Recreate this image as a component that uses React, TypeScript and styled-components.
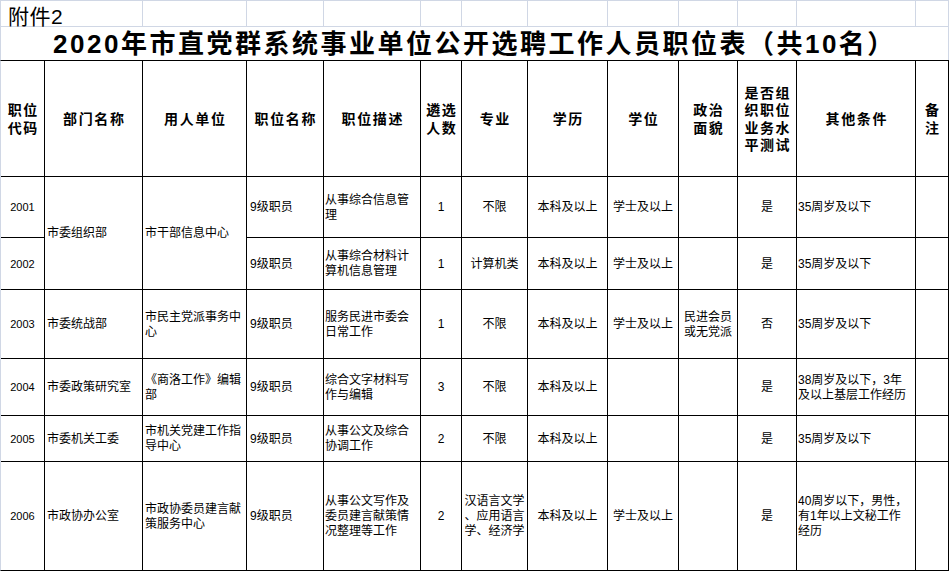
import React from 'react';
import styled, { createGlobalStyle } from 'styled-components';

const GRID = '#d0d7e5';
const COLS = '43px 97px 103px 76px 96px 40px 65px 79px 70px 58px 58px 118px 32px';
const ROWS = '115px 60px 51px 68px 56px 45px 108px';

const Global = createGlobalStyle`
  html, body { margin: 0; padding: 0; background: #fff; }
  body { width: 949px; height: 571px; overflow: hidden; }
  * { box-sizing: content-box; }
`;

const Sheet = styled.div`
  width: 949px;
  color: #000;
  font-family: "Liberation Sans", "Noto Sans CJK SC", sans-serif;
`;

const TopRow = styled.div`
  display: grid;
  grid-template-columns: ${COLS};
  grid-template-rows: 25px;
  column-gap: 1px;
  background: ${GRID};
  border: 1px solid ${GRID};
`;

const SheetCell = styled.div<{ $span?: number }>`
  background: #fff;
  grid-column: span ${(p) => p.$span || 1};
  position: relative;
`;

const Caption = styled.div`
  display: flex;
  align-items: flex-end;
  height: 25px;
  padding-left: 7px;
  font-family: "Liberation Sans", "Noto Sans CJK SC", sans-serif;
  font-size: 21px;
  line-height: 21px;
  letter-spacing: 0.5px;
  white-space: nowrap;
  transform: translateY(1px);
`;

const TitleRow = styled.div`
  height: 33px;
  border-left: 1px solid ${GRID};
  border-right: 1px solid ${GRID};
  display: flex;
  align-items: center;
  justify-content: center;
`;

const Title = styled.h1`
  margin: 0;
  padding: 2px 0 0 0;
  font-family: "Liberation Sans", "Noto Sans CJK SC", sans-serif;
  font-size: 26px;
  font-weight: 700;
  letter-spacing: 2.5px;
  line-height: 31px;
  white-space: nowrap;
`;

const Table = styled.div`
  display: grid;
  grid-template-columns: ${COLS};
  grid-template-rows: ${ROWS};
  gap: 1px;
  background: #000;
  border: 1px solid #000;
  border-left-color: ${GRID};
`;

const HeadCell = styled.div`
  background: #fff;
  display: flex;
  align-items: center;
  justify-content: center;
  text-align: center;
  font-family: "Liberation Sans", "Noto Sans CJK SC", sans-serif;
  font-size: 14px;
  font-weight: 700;
  line-height: 17.5px;
  letter-spacing: 1.6px;
  padding: 2px 0 0 1.6px;
  white-space: nowrap;
`;

const Cell = styled.div<{ $align?: 'left' | 'center'; $span?: number; $pad?: number; $size?: number }>`
  background: #fff;
  grid-row: span ${(p) => p.$span || 1};
  display: flex;
  align-items: center;
  justify-content: ${(p) => (p.$align === 'left' ? 'flex-start' : 'center')};
  text-align: ${(p) => (p.$align === 'left' ? 'left' : 'center')};
  padding-top: 1px;
  padding-left: ${(p) => (p.$align === 'left' ? p.$pad ?? 2 : 0)}px;
  font-size: ${(p) => p.$size || 12}px;
  line-height: 15px;
  white-space: nowrap;
  overflow: hidden;
`;

const Lines: React.FC<{ lines: string[] }> = ({ lines }) => (
  <span>
    {lines.map((l, i) => (
      <React.Fragment key={i}>
        {i > 0 && <br />}
        {l}
      </React.Fragment>
    ))}
  </span>
);

const headers: string[][] = [
  ['职位', '代码'],
  ['部门名称'],
  ['用人单位'],
  ['职位名称'],
  ['职位描述'],
  ['遴选', '人数'],
  ['专业'],
  ['学历'],
  ['学位'],
  ['政治', '面貌'],
  ['是否组', '织职位', '业务水', '平测试'],
  ['其他条件'],
  ['备', '注'],
];

type Row = {
  code: string;
  dept?: string[];
  unit?: string[];
  span?: number;
  desc: string[];
  n: string;
  major: string[];
  degree: string;
  pol: string[];
  test: string;
  other: string[];
};

const rows: Row[] = [
  {
    code: '2001',
    dept: ['市委组织部'],
    unit: ['市干部信息中心'],
    span: 2,
    desc: ['从事综合信息管', '理'],
    n: '1',
    major: ['不限'],
    degree: '学士及以上',
    pol: [],
    test: '是',
    other: ['35周岁及以下'],
  },
  {
    code: '2002',
    desc: ['从事综合材料计', '算机信息管理'],
    n: '1',
    major: ['计算机类'],
    degree: '学士及以上',
    pol: [],
    test: '是',
    other: ['35周岁及以下'],
  },
  {
    code: '2003',
    dept: ['市委统战部'],
    unit: ['市民主党派事务中', '心'],
    desc: ['服务民进市委会', '日常工作'],
    n: '1',
    major: ['不限'],
    degree: '学士及以上',
    pol: ['民进会员', '或无党派'],
    test: '否',
    other: ['35周岁及以下'],
  },
  {
    code: '2004',
    dept: ['市委政策研究室'],
    unit: ['《商洛工作》编辑', '部'],
    desc: ['综合文字材料写', '作与编辑'],
    n: '3',
    major: ['不限'],
    degree: '',
    pol: [],
    test: '是',
    other: ['38周岁及以下，3年', '及以上基层工作经历'],
  },
  {
    code: '2005',
    dept: ['市委机关工委'],
    unit: ['市机关党建工作指', '导中心'],
    desc: ['从事公文及综合', '协调工作'],
    n: '2',
    major: ['不限'],
    degree: '',
    pol: [],
    test: '是',
    other: ['35周岁及以下'],
  },
  {
    code: '2006',
    dept: ['市政协办公室'],
    unit: ['市政协委员建言献', '策服务中心'],
    desc: ['从事公文写作及', '委员建言献策情', '况整理等工作'],
    n: '2',
    major: ['汉语言文学', '、应用语言', '学、经济学'],
    degree: '学士及以上',
    pol: [],
    test: '是',
    other: ['40周岁以下，男性，', '有1年以上文秘工作', '经历'],
  },
];

export default function App() {
  return (
    <>
      <Global />
      <Sheet>
        <TopRow>
          <SheetCell $span={2}>
            <Caption>附件2</Caption>
          </SheetCell>
          {Array.from({ length: 11 }).map((_, i) => (
            <SheetCell key={i} />
          ))}
        </TopRow>
        <TitleRow>
          <Title>2020年市直党群系统事业单位公开选聘工作人员职位表（共10名）</Title>
        </TitleRow>
        <Table>
          {headers.map((h, i) => (
            <HeadCell key={i}>
              <Lines lines={h} />
            </HeadCell>
          ))}
          {rows.map((r) => (
            <React.Fragment key={r.code}>
              <Cell $size={11}>{r.code}</Cell>
              {r.dept && (
                <Cell $align="left" $span={r.span}>
                  <Lines lines={r.dept} />
                </Cell>
              )}
              {r.unit && (
                <Cell $align="left" $span={r.span}>
                  <Lines lines={r.unit} />
                </Cell>
              )}
              <Cell $align="left" $pad={3}>9级职员</Cell>
              <Cell $align="left" $pad={1}>
                <Lines lines={r.desc} />
              </Cell>
              <Cell>{r.n}</Cell>
              <Cell>
                <Lines lines={r.major} />
              </Cell>
              <Cell>本科及以上</Cell>
              <Cell>{r.degree}</Cell>
              <Cell>
                <Lines lines={r.pol} />
              </Cell>
              <Cell>{r.test}</Cell>
              <Cell $align="left" $pad={1}>
                <Lines lines={r.other} />
              </Cell>
              <Cell />
            </React.Fragment>
          ))}
        </Table>
      </Sheet>
    </>
  );
}
